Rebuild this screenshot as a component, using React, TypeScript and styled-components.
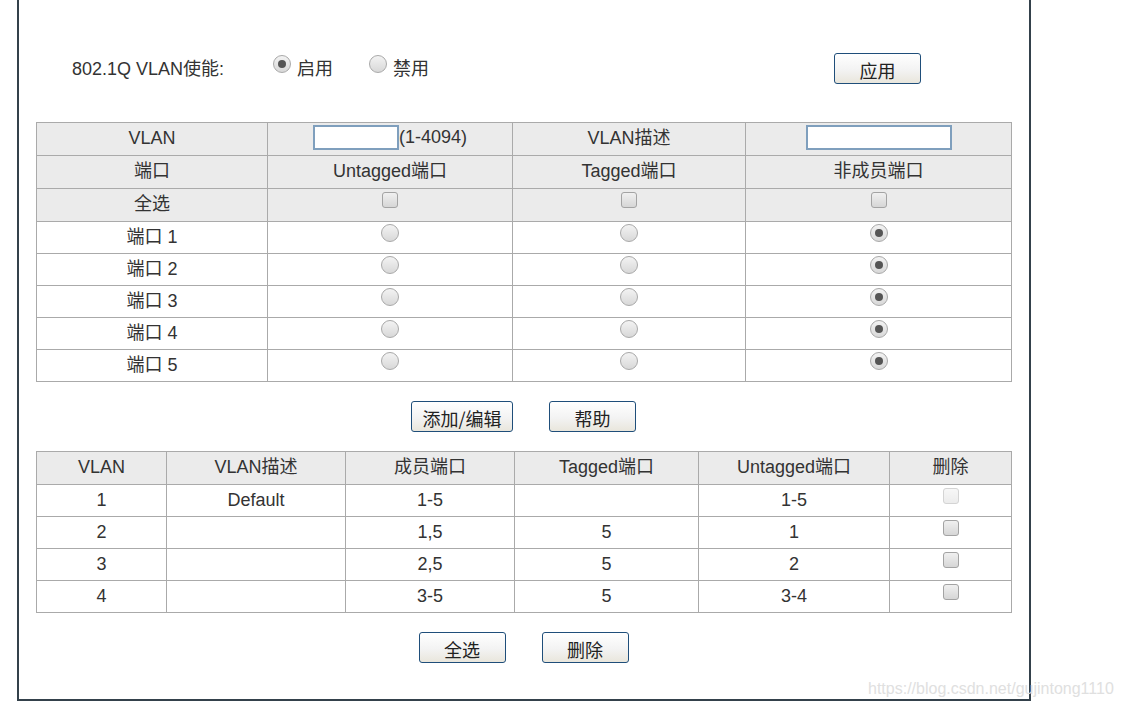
import styled, { createGlobalStyle } from "styled-components";

const Global = createGlobalStyle`
  html, body {
    margin: 0;
    padding: 0;
    background: #fff;
  }
  body {
    font-family: "Liberation Sans", Arial, "Noto Sans CJK SC", sans-serif;
    font-size: 18px;
    color: #333;
  }
`;

const Page = styled.div`
  position: relative;
  width: 1124px;
  height: 708px;
  overflow: hidden;
`;

const Frame = styled.div`
  margin-left: 17px;
  width: 1014px;
  height: 701px;
  box-sizing: border-box;
  border: 2px solid #34414b;
  border-top: none;
  padding: 53px 0 0 17px;
`;

const TopRow = styled.div`
  display: flex;
  align-items: center;
  height: 31px;
`;

const Label = styled.div`
  width: 201px;
  padding-left: 36px;
  box-sizing: content-box;
  margin-top: -3px;
`;

const RadioOption = styled.label<{ $w?: number }>`
  display: flex;
  align-items: center;
  gap: 6px;
  width: ${(p) => (p.$w ? `${p.$w}px` : "auto")};
  margin-top: -3px;
`;

const Spacer = styled.div`
  flex: 1;
`;

const Radio = styled.span<{ $on?: boolean }>`
  display: inline-block;
  position: relative;
  width: 18px;
  height: 18px;
  border-radius: 50%;
  border: 1px solid #a9a9a9;
  box-sizing: border-box;
  background: linear-gradient(#f3f3f3, #d8d8d8);
  vertical-align: middle;
  margin-top: -9px;
  &::after {
    content: "";
    display: ${(p) => (p.$on ? "block" : "none")};
    position: absolute;
    left: 4px;
    top: 4px;
    width: 8px;
    height: 8px;
    border-radius: 50%;
    background: #555;
  }
`;

const TopRadio = styled(Radio)`
  margin-top: -6px;
`;

const Check = styled.span<{ $disabled?: boolean }>`
  display: inline-block;
  width: 16px;
  height: 16px;
  border-radius: 3px;
  border: 1px solid ${(p) => (p.$disabled ? "#d4d4d4" : "#a3a3a3")};
  box-sizing: border-box;
  background: ${(p) =>
    p.$disabled ? "linear-gradient(#f7f7f7, #ececec)" : "linear-gradient(#f0f0f0, #d6d6d6)"};
  vertical-align: middle;
  margin-top: -10px;
`;

const Button = styled.button<{ $w: number }>`
  width: ${(p) => p.$w}px;
  height: 31px;
  border: 1px solid #1f4e7a;
  border-radius: 3px;
  background: linear-gradient(#ffffff, #f3f3f3 55%, #e9e6dc);
  font-family: "Noto Sans CJK SC", "Liberation Sans", sans-serif;
  font-size: 18px;
  color: #222;
  padding: 3px 0 0;
  line-height: 1;
  cursor: pointer;
`;

const Table = styled.table<{ $mt: number }>`
  border-collapse: collapse;
  width: 975px;
  margin-top: ${(p) => p.$mt}px;
  table-layout: fixed;
`;

const Row = styled.tr<{ $head?: boolean; $h: number }>`
  height: ${(p) => p.$h}px;
  background: ${(p) => (p.$head ? "#ebebeb" : "#fff")};
`;

const Cell = styled.td`
  border: 1px solid #aaa;
  text-align: center;
  padding: 0 0 2px;
  vertical-align: middle;
  line-height: 20px;
`;

const TextInput = styled.input<{ $w: number }>`
  width: ${(p) => p.$w}px;
  height: 25px;
  box-sizing: border-box;
  border: 2px solid #7f9fbd;
  background: #fff;
  vertical-align: middle;
  margin: -1px 0 0;
  padding: 0;
`;

const Buttons = styled.div<{ $mt: number; $gap: number }>`
  display: flex;
  justify-content: center;
  gap: ${(p) => p.$gap}px;
  margin-top: ${(p) => p.$mt}px;
  width: 975px;
`;

const Watermark = styled.div`
  position: absolute;
  left: 868px;
  top: 680px;
  font-size: 16px;
  color: #e0e0e0;
`;

const ports = [1, 2, 3, 4, 5];

const vlans = [
  { id: "1", desc: "Default", members: "1-5", tagged: "", untagged: "1-5", disabled: true },
  { id: "2", desc: "", members: "1,5", tagged: "5", untagged: "1" },
  { id: "3", desc: "", members: "2,5", tagged: "5", untagged: "2" },
  { id: "4", desc: "", members: "3-5", tagged: "5", untagged: "3-4" },
];

export default function App() {
  return (
    <Page>
      <Global />
      <Frame>
        <TopRow>
          <Label>802.1Q VLAN使能:</Label>
          <RadioOption $w={96}>
            <TopRadio $on />
            启用
          </RadioOption>
          <RadioOption>
            <TopRadio />
            禁用
          </RadioOption>
          <Spacer />
          <Button $w={87} style={{ marginRight: 108 }}>应用</Button>
        </TopRow>

        <Table $mt={38}>
          <colgroup>
            <col style={{ width: 231 }} />
            <col style={{ width: 245 }} />
            <col style={{ width: 233 }} />
            <col style={{ width: 266 }} />
          </colgroup>
          <tbody>
            <Row $head $h={33}>
              <Cell>VLAN</Cell>
              <Cell>
                <TextInput $w={86} />
                (1-4094)
              </Cell>
              <Cell>VLAN描述</Cell>
              <Cell>
                <TextInput $w={146} />
              </Cell>
            </Row>
            <Row $head $h={33}>
              <Cell>端口</Cell>
              <Cell>Untagged端口</Cell>
              <Cell>Tagged端口</Cell>
              <Cell>非成员端口</Cell>
            </Row>
            <Row $head $h={33}>
              <Cell>全选</Cell>
              <Cell>
                <Check />
              </Cell>
              <Cell>
                <Check />
              </Cell>
              <Cell>
                <Check />
              </Cell>
            </Row>
            {ports.map((p) => (
              <Row key={p} $h={32}>
                <Cell>端口 {p}</Cell>
                <Cell>
                  <Radio />
                </Cell>
                <Cell>
                  <Radio />
                </Cell>
                <Cell>
                  <Radio $on />
                </Cell>
              </Row>
            ))}
          </tbody>
        </Table>

        <Buttons $mt={19} $gap={36}>
          <Button $w={102}>添加/编辑</Button>
          <Button $w={87}>帮助</Button>
        </Buttons>

        <Table $mt={19}>
          <colgroup>
            <col style={{ width: 130 }} />
            <col style={{ width: 179 }} />
            <col style={{ width: 169 }} />
            <col style={{ width: 184 }} />
            <col style={{ width: 191 }} />
            <col style={{ width: 122 }} />
          </colgroup>
          <tbody>
            <Row $head $h={33}>
              <Cell>VLAN</Cell>
              <Cell>VLAN描述</Cell>
              <Cell>成员端口</Cell>
              <Cell>Tagged端口</Cell>
              <Cell>Untagged端口</Cell>
              <Cell>删除</Cell>
            </Row>
            {vlans.map((v) => (
              <Row key={v.id} $h={32}>
                <Cell>{v.id}</Cell>
                <Cell>{v.desc}</Cell>
                <Cell>{v.members}</Cell>
                <Cell>{v.tagged}</Cell>
                <Cell>{v.untagged}</Cell>
                <Cell>
                  <Check $disabled={v.disabled} />
                </Cell>
              </Row>
            ))}
          </tbody>
        </Table>

        <Buttons $mt={19} $gap={36}>
          <Button $w={87}>全选</Button>
          <Button $w={87}>删除</Button>
        </Buttons>
      </Frame>
      <Watermark>https://blog.csdn.net/gujintong1110</Watermark>
    </Page>
  );
}
